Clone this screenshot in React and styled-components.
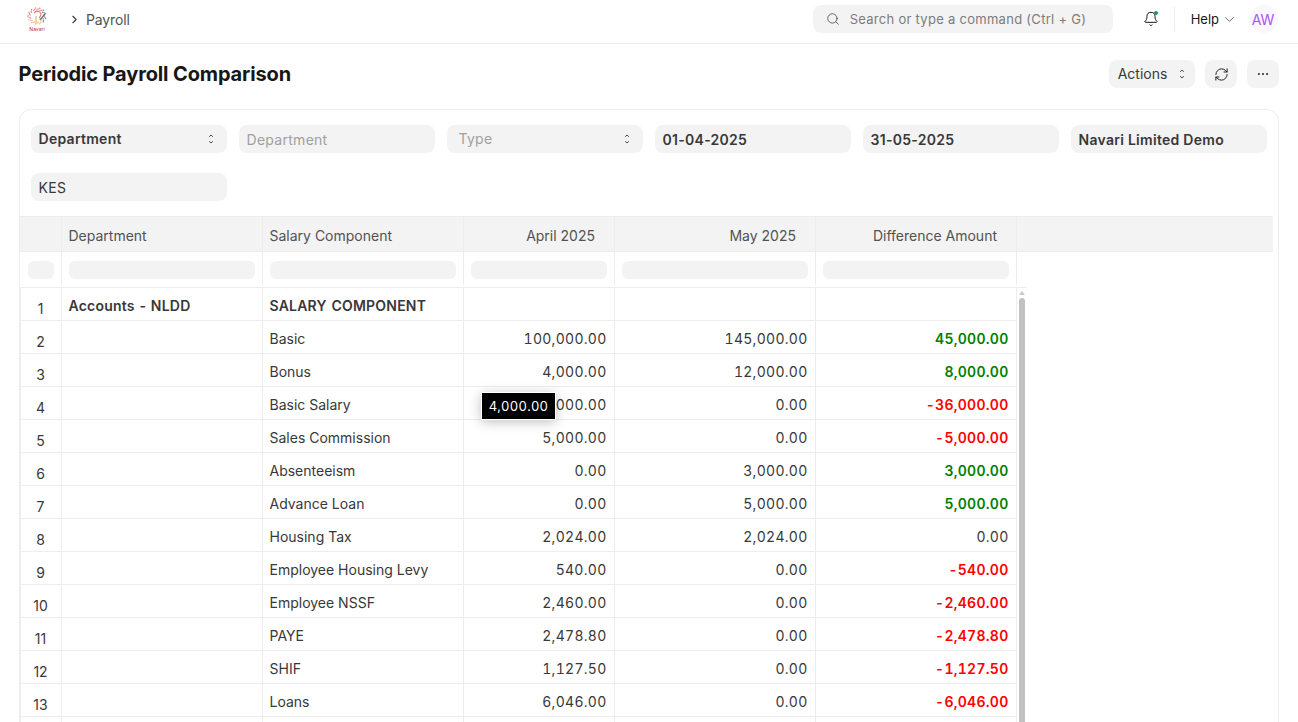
import React from "react";
import styled, { createGlobalStyle } from "styled-components";
import { Search, Bell, ChevronDown, ChevronRight, RefreshCw, Ellipsis } from "lucide-react";

const Global = createGlobalStyle`
  html, body { margin: 0; padding: 0; height: 722px; overflow: hidden; background: #fff; }
  body { font-family: Inter, "Liberation Sans", sans-serif; font-size: 14px; color: #383838; letter-spacing: 0.02em; }
  * { box-sizing: border-box; }
`;

const Nav = styled.header`
  height: 44px; border-bottom: 1px solid #ededed; display: flex; align-items: center;
  padding: 0 20px 5px 25px;
`;
const LogoWrap = styled.div`
  width: 24px; height: 28px; display: flex; flex-direction: column; align-items: center; margin-top: 3px;
`;
const LogoName = styled.span`
  font-size: 5px; line-height: 5px; color: #c0272d; letter-spacing: 0;
`;
const Crumb = styled.div`
  display: flex; align-items: center; gap: 5px; margin-left: 19px; color: #525252; font-size: 14px; letter-spacing: -0.01em;
`;
const SearchBox = styled.div`
  margin-left: auto; width: 300px; height: 28px; border-radius: 8px; background: #f3f3f3;
  display: flex; align-items: center; gap: 10px; padding-left: 13px; color: #7c7c7c; font-size: 13px;
`;
const BellWrap = styled.div`
  position: relative; width: 16px; height: 16px; margin-left: 30px; color: #171717; display: flex;
`;
const BellDot = styled.span`
  position: absolute; top: 0; right: 1px; width: 4px; height: 4px; border-radius: 50%; background: #278f5e;
`;
const NavDivider = styled.div`
  width: 1px; height: 24px; background: #ededed; margin: 0 16px 0 15px;
`;
const HelpLink = styled.div`
  display: flex; align-items: center; gap: 3px; color: #171717; font-size: 13px; letter-spacing: 0;
`;
const Avatar = styled.div`
  width: 28px; height: 28px; border-radius: 50%; background: #fbf7ff; color: #a855f7; margin-left: 13px;
  display: flex; align-items: center; justify-content: center; font-size: 14px; letter-spacing: 0; padding-right: 2px;
`;

const Head = styled.div`
  display: flex; align-items: center; justify-content: space-between; padding: 16px 19px 0 18.5px; height: 44px;
`;
const Title = styled.h1`
  margin: 0; font-size: 20px; line-height: 28px; font-weight: 700; color: #171717; letter-spacing: -0.13px;
`;
const Actions = styled.div`
  display: flex; gap: 10px;
`;
const Btn = styled.button`
  height: 28px; width: ${p => p.$w}px; border: 0; border-radius: 8px; background: #f3f3f3; color: #383838;
  display: flex; align-items: center; justify-content: center; gap: 11px; padding: 0;
  font: inherit; font-size: 14px;
`;
const RaisedLabel = styled.span`
  margin-top: -2px;
`;

const Card = styled.section`
  margin: 21px 19px 0; border: 1px solid #ededed; border-radius: 12px; height: 800px;
`;
const Filters = styled.div`
  display: flex; flex-wrap: wrap; gap: 20px 12px; padding: 15px 11px 15px;
`;
const Field = styled.div`
  width: 196px; height: 28px; border-radius: 8px; background: #f3f3f3; display: flex; align-items: center;
  justify-content: space-between; padding: 0 ${p => p.$select ? "12px" : "8px"} 0 ${p => p.$indent ? "11.5px" : "7.5px"};
  font-weight: ${p => p.$strong ? 600 : 400};
  color: ${p => p.$muted ? "#a0a0a0" : "#383838"};
`;

const Table = styled.div`
  margin-right: 5px; border-top: 1px solid #ededed;
`;
const columns = "42px 201px 201px 151px 201px 201px";
const HeadRow = styled.div`
  display: grid; grid-template-columns: ${columns} 1fr; height: 35px; background: #f3f3f3; border-bottom: 1px solid #ededed;
`;
const HeadCell = styled.div`
  display: flex; align-items: center; padding: 2px ${p => p.$right ? "19px" : "6px"} 0 6.5px; color: #525252; letter-spacing: 0;
  justify-content: ${p => p.$right ? "flex-end" : "flex-start"};
  border-right: 1px solid #ededed;
  &:last-child { border-right: 0; }
`;
const FilterRow = styled.div`
  display: grid; grid-template-columns: ${columns}; height: 35px; padding-bottom: 2px;
`;
const FilterCell = styled.div`
  border-right: 1px solid #ededed; padding: 9px 7px 0 7px;
  &:first-child { padding-left: 8px; }
`;
const Pill = styled.div`
  height: 18px; border-radius: 6px; background: #f3f3f3;
`;
const BodyWrap = styled.div`
  display: flex; align-items: stretch; border-top: 1px solid #ededed; width: 1007px;
`;
const Rows = styled.div`
  width: 997px;
`;
const Row = styled.div`
  display: grid; grid-template-columns: ${columns}; height: 33px; border-bottom: 1px solid #ededed;
`;
const Cell = styled.div`
  display: flex; align-items: center; padding: 3px 7.5px 0 6.5px; border-right: 1px solid #ededed; min-width: 0;
  justify-content: ${p => p.$right ? "flex-end" : "flex-start"};
  font-weight: ${p => p.$bold ? 600 : 400};
  color: ${p => p.$color || "#383838"};
  white-space: nowrap;
  word-spacing: ${p => p.$bold ? "1px" : "0"};
  font-variant-numeric: ${p => p.$num ? "tabular-nums" : "normal"};
  letter-spacing: ${p => p.$num ? "0.02em" : p.$bold ? "0.015em" : "0"};
`;
const IndexCell = styled.div`
  border-right: 1px solid #ededed; border-left: 1px solid #ededed; display: flex; align-items: center; justify-content: center;
  padding-top: 9px; padding-right: 1px; font-size: 14px; color: #383838; letter-spacing: 0;
`;
const Scrollbar = styled.div`
  width: 10px; padding: 3px 2px 0; display: flex; flex-direction: column; align-items: center; gap: 3px;
`;
const ScrollArrow = styled.div`
  width: 0; height: 0; border-left: 3px solid transparent; border-right: 3px solid transparent; border-bottom: 4px solid #c9c9c9;
`;
const ScrollThumb = styled.div`
  width: 6px; flex: 1; background: #c1c1c1; border-radius: 3px 3px 0 0;
`;
const CellAnchor = styled.div`
  position: relative; width: 100%; display: flex; justify-content: flex-end;
`;
const Tip = styled.div`
  position: absolute; left: 10.5px; top: -4px; height: 28px; width: 75px; background: #000; color: #fff; border: 1px solid #fff;
  display: flex; align-items: center; justify-content: center; font-size: 13px; font-weight: 400; letter-spacing: 0.02em;
  box-shadow: 0 2px 12px rgba(0,0,0,.25);
`;

const UpDown = () => (
  <svg width="8" height="12" viewBox="0 0 8 12" fill="none" stroke="#383838" strokeWidth="0.9" strokeLinecap="round" strokeLinejoin="round">
    <path d="M2.4 3.5 L4 2 L5.6 3.5" />
    <path d="M2.4 8.5 L4 10 L5.6 8.5" />
  </svg>
);

const Logo = () => {
  const dots = [];
  for (let i = 0; i < 40; i++) {
    const a = (i / 40) * Math.PI * 2;
    const r = 7 + (i % 3);
    dots.push([10 + r * Math.cos(a), 9 + r * Math.sin(a) * 0.9, i]);
  }
  return (
    <LogoWrap>
      <svg width="21" height="20" viewBox="0 0 21 20" opacity="0.75">
        {dots.map(([x, y, i]) => (
          <circle key={i} cx={x} cy={y} r="0.7"
            fill={i > 34 || i < 6 ? "#555" : i < 18 ? "#f2a03d" : "#e2524f"} />
        ))}
        <path d="M7 6 C11 2 17 6 12 11" fill="none" stroke="#e2524f" strokeWidth="1.2" />
        <path d="M9 9 L9 16" stroke="#f2a03d" strokeWidth="1.2" />
        <path d="M13 13 L18 7" stroke="#444" strokeWidth="1.4" />
      </svg>
      <LogoName>Navari</LogoName>
    </LogoWrap>
  );
};

const GREEN = "#008000";
const RED = "#ff0000";
const data = [
  ["Basic", "100,000.00", "145,000.00", "45,000.00", GREEN],
  ["Bonus", "4,000.00", "12,000.00", "8,000.00", GREEN],
  ["Basic Salary", "40,000.00", "0.00", "-36,000.00", RED],
  ["Sales Commission", "5,000.00", "0.00", "-5,000.00", RED],
  ["Absenteeism", "0.00", "3,000.00", "3,000.00", GREEN],
  ["Advance Loan", "0.00", "5,000.00", "5,000.00", GREEN],
  ["Housing Tax", "2,024.00", "2,024.00", "0.00", null],
  ["Employee Housing Levy", "540.00", "0.00", "-540.00", RED],
  ["Employee NSSF", "2,460.00", "0.00", "-2,460.00", RED],
  ["PAYE", "2,478.80", "0.00", "-2,478.80", RED],
  ["SHIF", "1,127.50", "0.00", "-1,127.50", RED],
  ["Loans", "6,046.00", "0.00", "-6,046.00", RED],
];

export default function App() {
  return (
    <>
      <Global />
      <Nav>
        <Logo />
        <Crumb><ChevronRight size={13} color="#383838" />Payroll</Crumb>
        <SearchBox><Search size={14} strokeWidth={1.5} color="#525252" />Search or type a command (Ctrl + G)</SearchBox>
        <BellWrap><Bell size={16} strokeWidth={1.5} /><BellDot /></BellWrap>
        <NavDivider />
        <HelpLink>Help<ChevronDown size={15} strokeWidth={1.2} color="#383838" /></HelpLink>
        <Avatar>AW</Avatar>
      </Nav>
      <Head>
        <Title>Periodic Payroll Comparison</Title>
        <Actions>
          <Btn $w={86}><RaisedLabel>Actions</RaisedLabel><UpDown /></Btn>
          <Btn $w={32}><RefreshCw size={15} strokeWidth={1.5} color="#171717" /></Btn>
          <Btn $w={32}><Ellipsis size={14} strokeWidth={1.8} /></Btn>
        </Actions>
      </Head>
      <Card>
        <Filters>
          <Field $strong $select><RaisedLabel>Department</RaisedLabel><UpDown /></Field>
          <Field $muted>Department</Field>
          <Field $muted $select $indent><RaisedLabel>Type</RaisedLabel><UpDown /></Field>
          <Field $strong>01-04-2025</Field>
          <Field $strong>31-05-2025</Field>
          <Field $strong>Navari Limited Demo</Field>
          <Field>KES</Field>
        </Filters>
        <Table>
          <HeadRow>
            <HeadCell />
            <HeadCell>Department</HeadCell>
            <HeadCell>Salary Component</HeadCell>
            <HeadCell $right>April 2025</HeadCell>
            <HeadCell $right>May 2025</HeadCell>
            <HeadCell $right>Difference Amount</HeadCell>
            <HeadCell />
          </HeadRow>
          <FilterRow>
            {[0, 1, 2, 3, 4, 5].map(i => <FilterCell key={i}><Pill /></FilterCell>)}
          </FilterRow>
          <BodyWrap>
            <Rows>
              <Row>
                <IndexCell>1</IndexCell>
                <Cell $bold>Accounts - NLDD</Cell>
                <Cell $bold>SALARY COMPONENT</Cell>
                <Cell /><Cell /><Cell />
              </Row>
              {data.map((d, i) => (
                <Row key={d[0]}>
                  <IndexCell>{i + 2}</IndexCell>
                  <Cell />
                  <Cell>{d[0]}</Cell>
                  <Cell $right $num>
                    {d[0] === "Basic Salary"
                      ? <CellAnchor>{d[1]}<Tip>4,000.00</Tip></CellAnchor>
                      : d[1]}
                  </Cell>
                  <Cell $right $num>{d[2]}</Cell>
                  <Cell $right $num $bold={!!d[4]} $color={d[4]}>{d[3]}</Cell>
                </Row>
              ))}
              <Row>
                <IndexCell /><Cell /><Cell /><Cell /><Cell /><Cell />
              </Row>
            </Rows>
            <Scrollbar><ScrollArrow /><ScrollThumb /></Scrollbar>
          </BodyWrap>
        </Table>
      </Card>
    </>
  );
}
